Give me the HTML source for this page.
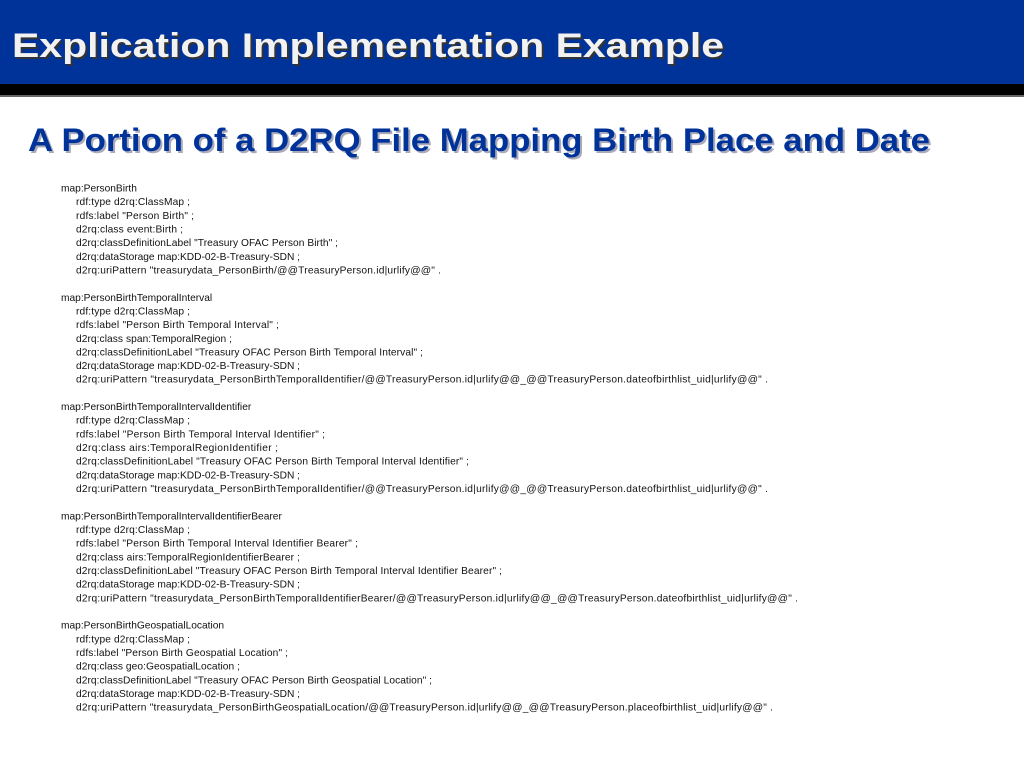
<!DOCTYPE html>
<html><head><meta charset="utf-8"><style>
html,body{margin:0;padding:0;background:#fff;width:1024px;height:768px;overflow:hidden}
svg{display:block}
.c{font-family:"Liberation Sans",sans-serif;font-size:10.2px;fill:#111}
</style></head><body>
<svg width="1024" height="768" viewBox="0 0 1024 768" xmlns="http://www.w3.org/2000/svg">
<rect x="0" y="0" width="1024" height="84" fill="#003399"/>
<rect x="0" y="84" width="1024" height="11" fill="#000"/>
<rect x="0" y="95" width="1024" height="2" fill="#666"/>
<text x="14" y="59" font-family="Liberation Sans,sans-serif" font-weight="bold" font-size="34" fill="#333" textLength="712" lengthAdjust="spacingAndGlyphs">Explication Implementation Example</text>
<text x="12" y="57" font-family="Liberation Sans,sans-serif" font-weight="bold" font-size="34" fill="#f2f2f2" textLength="712" lengthAdjust="spacingAndGlyphs">Explication Implementation Example</text>
<text x="30" y="153" font-family="Liberation Sans,sans-serif" font-weight="bold" font-size="32" fill="#aab" textLength="902" lengthAdjust="spacingAndGlyphs">A Portion of a D2RQ File Mapping Birth Place and Date</text>
<text x="28" y="151" font-family="Liberation Sans,sans-serif" font-weight="bold" font-size="32" fill="#003399" textLength="902" lengthAdjust="spacingAndGlyphs">A Portion of a D2RQ File Mapping Birth Place and Date</text>
<g class="c">
<text x="61" y="191.5">map:PersonBirth</text>
<text x="76" y="205.2" textLength="114" lengthAdjust="spacing">rdf:type d2rq:ClassMap ;</text>
<text x="76" y="218.8" textLength="118" lengthAdjust="spacing">rdfs:label "Person Birth" ;</text>
<text x="76" y="232.5" textLength="107" lengthAdjust="spacing">d2rq:class event:Birth ;</text>
<text x="76" y="246.1" textLength="262" lengthAdjust="spacing">d2rq:classDefinitionLabel "Treasury OFAC Person Birth" ;</text>
<text x="76" y="259.8" textLength="224" lengthAdjust="spacing">d2rq:dataStorage map:KDD-02-B-Treasury-SDN ;</text>
<text x="76" y="273.5" textLength="365" lengthAdjust="spacing">d2rq:uriPattern "treasurydata_PersonBirth/@@TreasuryPerson.id|urlify@@" .</text>

<text x="61" y="300.8">map:PersonBirthTemporalInterval</text>
<text x="76" y="314.4" textLength="114" lengthAdjust="spacing">rdf:type d2rq:ClassMap ;</text>
<text x="76" y="328.1" textLength="203" lengthAdjust="spacing">rdfs:label "Person Birth Temporal Interval" ;</text>
<text x="76" y="341.8" textLength="156" lengthAdjust="spacing">d2rq:class span:TemporalRegion ;</text>
<text x="76" y="355.4" textLength="347" lengthAdjust="spacing">d2rq:classDefinitionLabel "Treasury OFAC Person Birth Temporal Interval" ;</text>
<text x="76" y="369.1" textLength="224" lengthAdjust="spacing">d2rq:dataStorage map:KDD-02-B-Treasury-SDN ;</text>
<text x="76" y="382.7" textLength="692" lengthAdjust="spacing">d2rq:uriPattern "treasurydata_PersonBirthTemporalIdentifier/@@TreasuryPerson.id|urlify@@_@@TreasuryPerson.dateofbirthlist_uid|urlify@@" .</text>

<text x="61" y="410.1">map:PersonBirthTemporalIntervalIdentifier</text>
<text x="76" y="423.7" textLength="114" lengthAdjust="spacing">rdf:type d2rq:ClassMap ;</text>
<text x="76" y="437.4" textLength="249" lengthAdjust="spacing">rdfs:label "Person Birth Temporal Interval Identifier" ;</text>
<text x="76" y="451.0" textLength="202" lengthAdjust="spacing">d2rq:class airs:TemporalRegionIdentifier ;</text>
<text x="76" y="464.7" textLength="393" lengthAdjust="spacing">d2rq:classDefinitionLabel "Treasury OFAC Person Birth Temporal Interval Identifier" ;</text>
<text x="76" y="478.4" textLength="224" lengthAdjust="spacing">d2rq:dataStorage map:KDD-02-B-Treasury-SDN ;</text>
<text x="76" y="492.0" textLength="692" lengthAdjust="spacing">d2rq:uriPattern "treasurydata_PersonBirthTemporalIdentifier/@@TreasuryPerson.id|urlify@@_@@TreasuryPerson.dateofbirthlist_uid|urlify@@" .</text>

<text x="61" y="519.4">map:PersonBirthTemporalIntervalIdentifierBearer</text>
<text x="76" y="533.0" textLength="114" lengthAdjust="spacing">rdf:type d2rq:ClassMap ;</text>
<text x="76" y="546.7" textLength="282" lengthAdjust="spacing">rdfs:label "Person Birth Temporal Interval Identifier Bearer" ;</text>
<text x="76" y="560.3" textLength="224" lengthAdjust="spacing">d2rq:class airs:TemporalRegionIdentifierBearer ;</text>
<text x="76" y="574.0" textLength="426" lengthAdjust="spacing">d2rq:classDefinitionLabel "Treasury OFAC Person Birth Temporal Interval Identifier Bearer" ;</text>
<text x="76" y="587.6" textLength="224" lengthAdjust="spacing">d2rq:dataStorage map:KDD-02-B-Treasury-SDN ;</text>
<text x="76" y="601.3" textLength="722" lengthAdjust="spacing">d2rq:uriPattern "treasurydata_PersonBirthTemporalIdentifierBearer/@@TreasuryPerson.id|urlify@@_@@TreasuryPerson.dateofbirthlist_uid|urlify@@" .</text>

<text x="61" y="628.6">map:PersonBirthGeospatialLocation</text>
<text x="76" y="642.3" textLength="114" lengthAdjust="spacing">rdf:type d2rq:ClassMap ;</text>
<text x="76" y="656.0" textLength="212" lengthAdjust="spacing">rdfs:label "Person Birth Geospatial Location" ;</text>
<text x="76" y="669.6" textLength="164" lengthAdjust="spacing">d2rq:class geo:GeospatialLocation ;</text>
<text x="76" y="683.3" textLength="356" lengthAdjust="spacing">d2rq:classDefinitionLabel "Treasury OFAC Person Birth Geospatial Location" ;</text>
<text x="76" y="696.9" textLength="224" lengthAdjust="spacing">d2rq:dataStorage map:KDD-02-B-Treasury-SDN ;</text>
<text x="76" y="710.6" textLength="697" lengthAdjust="spacing">d2rq:uriPattern "treasurydata_PersonBirthGeospatialLocation/@@TreasuryPerson.id|urlify@@_@@TreasuryPerson.placeofbirthlist_uid|urlify@@" .</text>
</g>
</svg>
</body></html>
